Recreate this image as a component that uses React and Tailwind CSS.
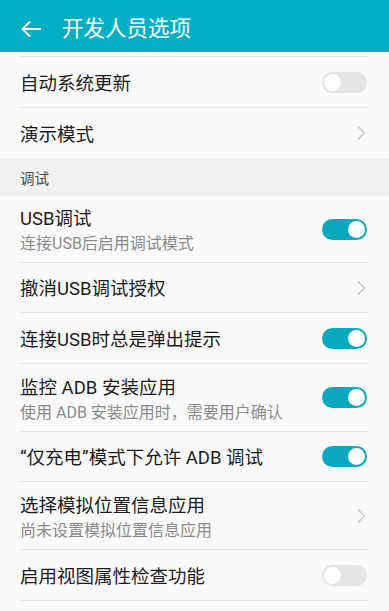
import React from "react";

const font = { fontFamily: 'Roboto, "Noto Sans CJK SC", "Noto Sans", sans-serif' };

function Toggle({ on }) {
  return (
    <div
      className={`relative w-[45px] h-[21px] rounded-full shrink-0 ${on ? "bg-[#0ba9c0]" : "bg-[#e4e4e4]"}`}
    >
      <div
        className={`absolute top-[2px] w-[17px] h-[17px] rounded-full bg-white ${on ? "right-[2px]" : "left-[2px]"}`}
      />
    </div>
  );
}

function Chevron() {
  return (
    <svg width="10" height="16" viewBox="0 0 10 16" className="shrink-0 mr-[1px]">
      <path d="M2 1.5 L8.5 8 L2 14.5" fill="none" stroke="#c6c6c6" strokeWidth="1.3" />
    </svg>
  );
}

function Row({ title, sub, right, h }) {
  return (
    <div className="px-[20px]">
      <div className={`flex items-center justify-between border-b border-[#e3e3e3] ${h}`}>
        <div className="flex flex-col pt-[3px]">
          <div className="text-[18.5px] leading-[24px] text-[#1c1c1c]">{title}</div>
          {sub && <div className="text-[16px] leading-[20px] text-[#8a8a8a] mt-[3px]">{sub}</div>}
        </div>
        <div className="pr-[2px]">{right}</div>
      </div>
    </div>
  );
}

export default function App() {
  return (
    <div className="w-[389px] h-[611px] overflow-hidden bg-[#fafafa] flex flex-col" style={font}>
      <div className="h-[52px] bg-[#02aec4] flex items-center shrink-0 pt-[5px]">
        <svg width="21" height="18" viewBox="0 0 21 18" className="ml-[21px]">
          <path d="M20 9 H2 M9 1.5 L1.5 9 L9 16.5" fill="none" stroke="white" strokeWidth="1.8" />
        </svg>
        <div className="ml-[20px] text-white text-[21.5px] leading-none">开发人员选项</div>
      </div>
      <div className="h-[5px] px-[20px]">
        <div className="h-full border-b border-[#e3e3e3]" />
      </div>
      <Row h="h-[51px]" title="自动系统更新" right={<Toggle on={false} />} />
      <Row h="h-[50px] border-b-0" title="演示模式" right={<Chevron />} />
      <div className="h-[38px] bg-[#f1f1f1] flex items-center px-[20px] text-[14.5px] text-[#4a4a4a] pt-[6px]">调试</div>
      <Row h="h-[67px]" title="USB调试" sub="连接USB后启用调试模式" right={<Toggle on />} />
      <Row h="h-[50px]" title="撤消USB调试授权" right={<Chevron />} />
      <Row h="h-[51px]" title="连接USB时总是弹出提示" right={<Toggle on />} />
      <Row h="h-[68px]" title="监控 ADB 安装应用" sub="使用 ADB 安装应用时，需要用户确认" right={<Toggle on />} />
      <Row h="h-[50px]" title="“仅充电”模式下允许 ADB 调试" right={<Toggle on />} />
      <Row h="h-[68px]" title="选择模拟位置信息应用" sub="尚未设置模拟位置信息应用" right={<Chevron />} />
      <Row h="h-[51px]" title="启用视图属性检查功能" right={<Toggle on={false} />} />
    </div>
  );
}
